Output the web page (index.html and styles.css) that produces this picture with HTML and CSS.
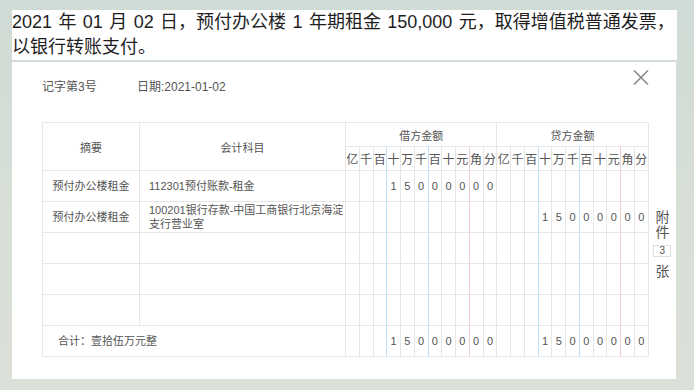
FILE: index.html
```html
<!DOCTYPE html>
<html lang="zh-CN">
<head>
<meta charset="utf-8">
<title>记账凭证</title>
<link rel="stylesheet" href="styles.css">
</head>
<body>
<div class="wrap">
  <div class="question">2021 年 01 月 02 日，预付办公楼 1 年期租金 150,000 元，取得增值税普通发票，以银行转账支付。</div>
  <div class="dialog">
    <div class="dlg-head">
      <span class="voucher-no">记字第3号</span>
      <span class="voucher-date">日期:2021-01-02</span>
      <svg class="close" width="16" height="15" viewBox="0 0 16 15"><path d="M1 0.5 L15 14.5 M15 0.5 L1 14.5" stroke="#8a8a8a" stroke-width="1.6" fill="none"/></svg>
    </div>
    <div class="dlg-body">
      <table class="voucher">
        <colgroup>
          <col class="c-summary"><col class="c-account">
          <col class="c-d"><col class="c-d"><col class="c-d"><col class="c-d"><col class="c-d"><col class="c-d"><col class="c-d"><col class="c-d"><col class="c-d"><col class="c-d"><col class="c-d">
          <col class="c-d"><col class="c-d"><col class="c-d"><col class="c-d"><col class="c-d"><col class="c-d"><col class="c-d"><col class="c-d"><col class="c-d"><col class="c-d"><col class="c-d">
        </colgroup>
        <thead>
          <tr class="h1">
            <th rowspan="2">摘要</th>
            <th rowspan="2">会计科目</th>
            <th colspan="11">借方金额</th>
            <th colspan="11">贷方金额</th>
          </tr>
          <tr class="h2">
            <th>亿</th><th>千</th><th class="bb">百</th><th>十</th><th>万</th><th class="bb">千</th><th>百</th><th>十</th><th class="br">元</th><th>角</th><th>分</th>
            <th>亿</th><th>千</th><th class="bb">百</th><th>十</th><th>万</th><th class="bb">千</th><th>百</th><th>十</th><th class="br">元</th><th>角</th><th>分</th>
          </tr>
        </thead>
        <tbody>
          <tr>
            <td class="sum">预付办公楼租金</td>
            <td class="acct">112301预付账款-租金</td>
            <td></td><td></td><td class="bb"></td><td>1</td><td>5</td><td class="bb">0</td><td>0</td><td>0</td><td class="br">0</td><td>0</td><td>0</td>
            <td></td><td></td><td class="bb"></td><td></td><td></td><td class="bb"></td><td></td><td></td><td class="br"></td><td></td><td></td>
          </tr>
          <tr>
            <td class="sum">预付办公楼租金</td>
            <td class="acct">100201银行存款-中国工商银行北京海淀支行营业室</td>
            <td></td><td></td><td class="bb"></td><td></td><td></td><td class="bb"></td><td></td><td></td><td class="br"></td><td></td><td></td>
            <td></td><td></td><td class="bb"></td><td>1</td><td>5</td><td class="bb">0</td><td>0</td><td>0</td><td class="br">0</td><td>0</td><td>0</td>
          </tr>
          <tr>
            <td></td><td></td>
            <td></td><td></td><td class="bb"></td><td></td><td></td><td class="bb"></td><td></td><td></td><td class="br"></td><td></td><td></td>
            <td></td><td></td><td class="bb"></td><td></td><td></td><td class="bb"></td><td></td><td></td><td class="br"></td><td></td><td></td>
          </tr>
          <tr>
            <td></td><td></td>
            <td></td><td></td><td class="bb"></td><td></td><td></td><td class="bb"></td><td></td><td></td><td class="br"></td><td></td><td></td>
            <td></td><td></td><td class="bb"></td><td></td><td></td><td class="bb"></td><td></td><td></td><td class="br"></td><td></td><td></td>
          </tr>
          <tr>
            <td></td><td></td>
            <td></td><td></td><td class="bb"></td><td></td><td></td><td class="bb"></td><td></td><td></td><td class="br"></td><td></td><td></td>
            <td></td><td></td><td class="bb"></td><td></td><td></td><td class="bb"></td><td></td><td></td><td class="br"></td><td></td><td></td>
          </tr>
          <tr class="total">
            <td colspan="2" class="total-label">合计：壹拾伍万元整</td>
            <td></td><td></td><td class="bb"></td><td>1</td><td>5</td><td class="bb">0</td><td>0</td><td>0</td><td class="br">0</td><td>0</td><td>0</td>
            <td></td><td></td><td class="bb"></td><td>1</td><td>5</td><td class="bb">0</td><td>0</td><td>0</td><td class="br">0</td><td>0</td><td>0</td>
          </tr>
        </tbody>
      </table>
      <div class="attach">
        <span class="attach-word">附</span>
        <span class="attach-word">件</span>
        <span class="attach-count">3</span>
        <span class="attach-word last">张</span>
      </div>
    </div>
  </div>
</div>
</body>
</html>
```

FILE: styles.css
```css
html, body {
  margin: 0;
  padding: 0;
}
body {
  width: 694px;
  height: 390px;
  overflow: hidden;
  background: linear-gradient(180deg, #cfdbd5 0%, #d7dfd7 50%, #dbe0d9 100%);
  font-family: "Liberation Sans", "Noto Sans CJK SC", sans-serif;
}
.wrap {
  padding: 10px 0 0 12px;
  width: 665px;
}
.question {
  background: #ffffff;
  height: 50px;
  font-size: 18px;
  line-height: 25px;
  color: #1e1e1e;
  word-spacing: 1.4px;
}
.dialog {
  margin-top: 2px;
  background: #ffffff;
  height: 317px;
  width: 664px;
  box-sizing: border-box;
  padding-left: 30px;
}
.dlg-head {
  display: flex;
  align-items: flex-start;
  height: 60px;
  box-sizing: border-box;
  padding: 8px 27px 0 0;
  font-size: 12px;
  line-height: 14px;
  color: #555555;
}
.voucher-no {
  width: 95px;
  margin-top: 10px;
}
.voucher-date {
  margin-top: 10px;
}
.close {
  margin-left: auto;
}
.dlg-body {
  display: flex;
  align-items: flex-start;
}
.voucher {
  width: 606px;
  table-layout: fixed;
  border-collapse: separate;
  border-spacing: 0;
  border-top: 1px solid #e6e6e6;
  border-left: 1px solid #e6e6e6;
  font-size: 11px;
  color: #555555;
}
.c-summary { width: 97px; }
.c-account { width: 206px; }
.c-d { width: 13.75px; }
.voucher th,
.voucher td {
  border-right: 1px solid #e6e6e6;
  border-bottom: 1px solid #e6e6e6;
  padding: 0;
  text-align: center;
  font-weight: normal;
  vertical-align: middle;
}
.voucher th {
  height: 23px;
}
.voucher .h2 th {
  font-size: 12px;
}
.voucher td {
  height: 30px;
  line-height: 14px;
}
.voucher .bb {
  border-right-color: #bfe0f6;
}
.voucher .br {
  border-right-color: #f2cfcf;
}
.voucher td.acct {
  text-align: left;
  padding: 0 1px 0 9px;
}
.voucher td.total-label {
  text-align: left;
  padding-left: 15px;
}
.attach {
  width: 28px;
  padding-top: 88px;
  display: flex;
  flex-direction: column;
  align-items: center;
  font-size: 14px;
  line-height: 15px;
  color: #555555;
}
.attach-count {
  margin: 5px 0 7px;
  width: 16px;
  height: 10px;
  border: 1px solid #e0e0e0;
  font-size: 10px;
  line-height: 10px;
  text-align: center;
}
```
